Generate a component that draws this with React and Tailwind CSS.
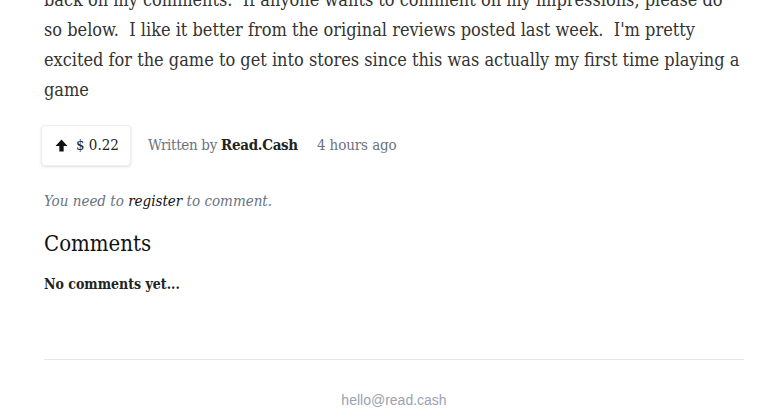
export default function App() {
  const serif = { fontFamily: '"DejaVu Serif Condensed", "Liberation Serif", serif' };

  return (
    <div className="bg-white w-[762px] h-[420px] overflow-hidden" style={serif}>
      <div className="pl-[44px] pr-[18px] -mt-[15px]">
        {/* Article tail */}
        <p className="text-[18px] leading-[30px] text-[#333]">
          back on my comments.{"\u00a0 "}If anyone wants to comment on my impressions, please do so below.{"\u00a0 "}I like it
          better from the original reviews posted last week.{"\u00a0 "}I'm pretty excited for the game to get into stores
          since this was actually my first time playing a game
        </p>

        {/* Tip + byline */}
        <div className="flex items-center mt-[20px] -ml-[3px]">
          <button className="flex items-center gap-[8px] h-[41px] w-[90px] pl-[13px] rounded-[4px] bg-white border border-[#eceef1] shadow-[0_1px_3px_rgba(0,0,0,0.12)] text-[15px] text-[#222]">
            <svg width="13" height="13" viewBox="0 0 12 12" className="text-[#111]">
              <path d="M6 0.5 L11.5 6.5 H8 V11.5 H4 V6.5 H0.5 Z" fill="currentColor" />
            </svg>
            <span>$ 0.22</span>
          </button>
          <span className="ml-[17px] text-[15px] tracking-[-0.3px] text-[#6b7280]">
            Written by <span className="font-bold text-[#222]">Read.Cash</span>
          </span>
          <span className="ml-[19px] text-[15px] tracking-[-0.1px] text-[#6b7280]">4 hours ago</span>
        </div>

        {/* Register prompt */}
        <p className="mt-[24px] text-[15px] italic text-[#6b7280]">
          You need to <span className="text-[#111]">register</span> to comment.
        </p>

        {/* Comments */}
        <h2 className="mt-[17px] text-[22px] leading-[28px] text-[#111]">Comments</h2>
        <p className="mt-[16px] text-[14px] font-bold text-[#222]">No comments yet...</p>

        <div className="mt-[64px] border-t border-[#e5e7eb]" />
        <p
          className="mt-[30px] text-center text-[14px] text-[#9aa3b0]"
          style={{ fontFamily: '"Liberation Sans", Arial, sans-serif' }}
        >
          hello@read.cash
        </p>
      </div>
    </div>
  );
}
